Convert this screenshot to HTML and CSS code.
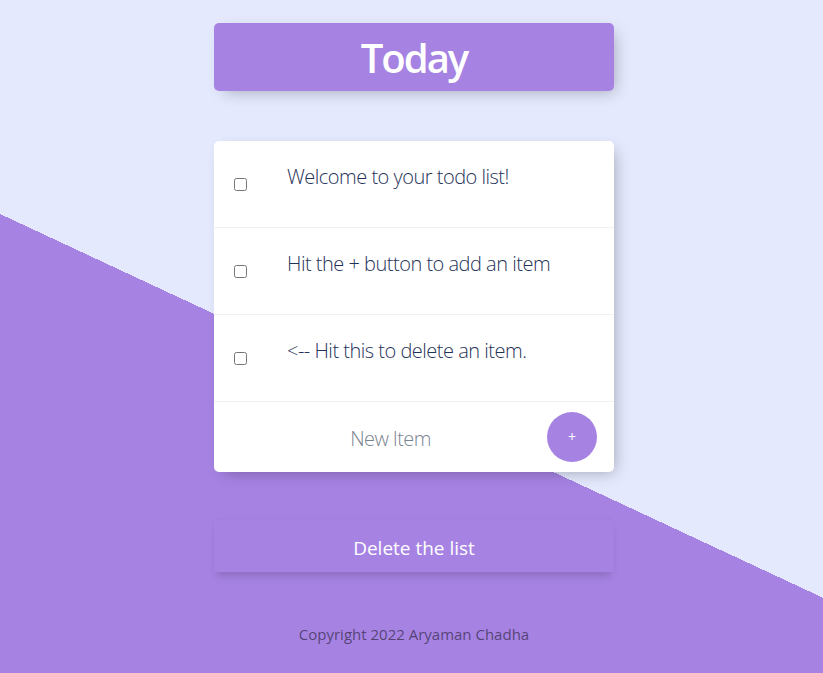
FILE: index.html
```html
<!DOCTYPE html>
<html lang="en">
<head>
<meta charset="utf-8">
<title>To-Do List</title>
<link rel="stylesheet" href="styles.css">
</head>
<body>
  <div class="box heading">
    <h1>Today</h1>
  </div>

  <div class="box list">
    <div class="item">
      <input type="checkbox" class="check">
      <p class="item-text">Welcome to your todo list!</p>
    </div>
    <div class="item">
      <input type="checkbox" class="check">
      <p class="item-text">Hit the + button to add an item</p>
    </div>
    <div class="item">
      <input type="checkbox" class="check">
      <p class="item-text">&lt;-- Hit this to delete an item.</p>
    </div>
    <form class="item new-item">
      <input type="text" class="new-input" placeholder="New Item" autocomplete="off">
      <button type="button" class="add-btn">+</button>
    </form>
  </div>

  <div class="delete-wrap">
    <button type="button" class="delete-btn">Delete the list</button>
  </div>

  <footer class="footer">Copyright 2022 Aryaman Chadha</footer>
</body>
</html>
```

FILE: styles.css
```css
html {
  height: 100%;
  background-color: #E4E9FD;
  background-image: linear-gradient(25deg, #A683E3 416px, #E4E9FD 416px);
  font-family: "Open Sans", "Noto Sans", sans-serif;
}

body {
  margin: 0;
  padding: 23px 0 0 5px;
}

.box {
  width: 400px;
  margin: 0 auto;
  background: #fff;
  border-radius: 5px;
  box-shadow: 5px 5px 15px -5px rgba(0, 0, 0, 0.3);
}

.heading {
  background-color: #A683E3;
  text-align: center;
}

.heading h1 {
  margin: 0;
  height: 68px;
  line-height: 70px;
  font-size: 40px;
  font-weight: 600;
  letter-spacing: -2px;
  color: #fff;
}

.list {
  margin-top: 50px;
}

.item {
  display: flex;
  align-items: center;
  min-height: 86px;
  border-bottom: 1px solid #F1F1F1;
}

.item.new-item {
  border-bottom: 0;
  min-height: 70px;
  margin: 0;
  padding-left: 20px;
}

.check {
  width: 13px;
  height: 13px;
  margin: 20px;
  flex: none;
}

.item-text {
  margin: 0;
  align-self: flex-start;
  padding: 22px 20px 37px;
  font-size: 20px;
  line-height: 27px;
  font-weight: 300;
  letter-spacing: -0.5px;
  color: #1f3358;
}

.new-input {
  width: 313px;
  height: 60px;
  padding: 2px 0 0;
  border: none;
  background: transparent;
  text-align: center;
  font-family: inherit;
  font-size: 20px;
  font-weight: 300;
  letter-spacing: -0.6px;
  outline: none;
}

.new-input::placeholder {
  color: #7b8391;
}

.add-btn {
  width: 50px;
  height: 50px;
  padding: 0;
  border: 0;
  border-radius: 50%;
  background-color: #A683E3;
  color: #fff;
  font-family: inherit;
  font-size: 14px;
  line-height: 50px;
}

.delete-wrap {
  width: 400px;
  margin: 48px auto 0;
}

.delete-btn {
  display: block;
  width: 100%;
  height: 52px;
  padding: 4px 0 0;
  border: 0;
  background-color: #A683E3;
  color: #fff;
  font-family: inherit;
  font-size: 19px;
  box-shadow: 0 7px 8px -3px rgba(0, 0, 0, 0.16), 0 -2px 5px -2px rgba(0, 0, 0, 0.05);
}

.footer {
  margin-top: 52px;
  text-align: center;
  font-size: 15px;
  color: rgba(0, 0, 0, 0.5);
}
```
